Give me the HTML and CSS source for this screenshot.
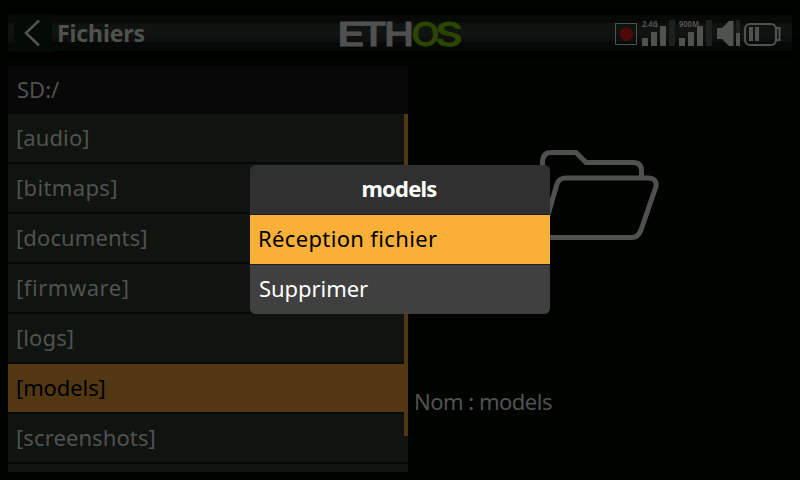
FILE: index.html
```html
<!DOCTYPE html>
<html lang="fr">
<head>
<meta charset="utf-8">
<title>Fichiers</title>
<link rel="stylesheet" href="styles.css">
</head>
<body>
<div class="screen">
  <header class="topbar">
    <button class="back" aria-label="Retour"><svg width="38" height="38" viewBox="0 0 38 38"><path d="M25 6.500 L12 19 L25 31.500" fill="none" stroke="#50524f" stroke-width="2.600"/></svg></button>
    <h1 class="title">Fichiers</h1>
    <svg class="logo" width="130" height="50" viewBox="0 0 130 50">
      <text class="logo-text" x="-1" y="37.500" fill="#505050" stroke="#505050" textLength="28" lengthAdjust="spacingAndGlyphs">E</text>
      <text class="logo-text" x="22" y="37.500" fill="#505050" stroke="#505050" textLength="27" lengthAdjust="spacingAndGlyphs">T</text>
      <text class="logo-text" x="46" y="37.500" fill="#505050" stroke="#505050" textLength="30" lengthAdjust="spacingAndGlyphs">H</text>
      <text class="logo-text" x="73.500" y="37.500" fill="#2b4600" stroke="#2b4600" textLength="28" lengthAdjust="spacingAndGlyphs">O</text>
      <text class="logo-text" x="97.500" y="37.500" fill="#2b4600" stroke="#2b4600" textLength="27" lengthAdjust="spacingAndGlyphs">S</text>
    </svg>
    <svg class="status" width="170" height="30" viewBox="0 0 170 30">
      <rect x="0.500" y="5.500" width="21" height="21" fill="none" stroke="#50524f"/>
      <path d="M9.500 9.500h4l4.500 4v5l-4.500 4.500h-4l-4.500-4.500v-5z" fill="#500808"/>
      <text class="band" x="27" y="8.500" textLength="16" lengthAdjust="spacingAndGlyphs">2.4G</text>
      <path d="M27 20h6v8h-6zM36 14h6v14h-6zM45 8h6v20h-6z" fill="#50524f"/>
      <path d="M54 2h6v26h-6z" fill="#1d211e"/>
      <text class="band" x="64" y="8.500" textLength="20" lengthAdjust="spacingAndGlyphs">900M</text>
      <path d="M64 20h6v8h-6zM73 14h6v14h-6zM82 8h6v20h-6z" fill="#50524f"/>
      <path d="M91 2h6v26h-6z" fill="#1d211e"/>
      <path d="M102 10h5l7-7h4.500v25h-4.500l-7-7h-5z" fill="#50524f"/>
      <path d="M121 2h4v13h-4z" fill="#1d211e"/><path d="M121 15h4v13h-4z" fill="#50524f"/>
      <rect x="130" y="6" width="31" height="21" rx="5" fill="none" stroke="#50524f" stroke-width="2.200"/>
      <path d="M161 10h3.500v12h-3.500" fill="none" stroke="#50524f" stroke-width="2"/>
      <path d="M134 9h4v14h-4zM140 9h4v14h-4z" fill="#50524f"/>
    </svg>
  </header>
  <main class="content">
    <section class="files">
      <div class="path">SD:/</div>
      <ul class="list">
        <li class="row">[audio]</li>
        <li class="row roomy">[bitmaps]</li>
        <li class="row">[documents]</li>
        <li class="row wide">[firmware]</li>
        <li class="row">[logs]</li>
        <li class="row selected tight">[models]</li>
        <li class="row">[screenshots]</li>
        <li class="row"></li>
      </ul>
      <div class="scrollbar"></div>
    </section>
    <section class="details">
      <svg class="folder" width="122" height="94" viewBox="0 0 122 94" fill="none" stroke="#505050" stroke-width="5">
        <path d="M4.500 91 V15 Q4.500 4.500 13 4.500 H38 L48 14.500 H95 Q103.500 14.500 103.500 23 V30"/>
        <path d="M28 30 H110 Q119 30 118 38.500 L103 82 Q100 89.500 94 89.500 H7 Q3 89.500 5 84 L19 36 Q21 30 28 30 Z"/>
      </svg>
      <p class="name">Nom : models</p>
    </section>
  </main>
  <div class="dialog" role="dialog">
    <div class="dialog-title">models</div>
    <div class="option active">Réception fichier</div>
    <div class="option">Supprimer</div>
  </div>
</div>
</body>
</html>
```
FILE: styles.css
```css
* { box-sizing: border-box; margin: 0; padding: 0; }
body { background: #000300; font-family: "Noto Sans", "Open Sans", sans-serif; font-size: 22px; line-height: 30px; color: #50524f; }
.screen { position: relative; width: 800px; height: 480px; padding: 8px; overflow: hidden; background: #000300; }
.topbar { display: flex; height: 50px; background: linear-gradient(#000 7px, #080907 7px, #070a07 15px, #0e100e 15px, #101411 19px, #101411 28px, #0f0f0f 28px, #0e0e0e 34px, #050a06 34px, #060706 43px, #000 43px); }
.back { width: 38px; height: 38px; margin: 6px 0 0 6px; border: 0; background: #040a06; }
.back svg { display: block; }
.title { width: 286px; padding: 10px 0 0 5px; font-size: 23px; font-weight: 700; letter-spacing: -0.1px; }
.logo { overflow: visible; }
.logo-text { font: 500 33px Inter, sans-serif; stroke-width: 1px; }
.status { margin: 10px 0 0 147px; flex: none; }
.band { font: 700 8px "Noto Sans", sans-serif; fill: #50524f; }
.content { display: flex; height: 406px; margin-top: 8px; }
.files { position: relative; width: 400px; overflow: hidden; background: #080808; }
.path { height: 48px; padding: 8px 9px; }
.list { list-style: none; }
.row { height: 48px; margin-bottom: 2px; padding: 8px; background: #101411; letter-spacing: 0.1px; }
.roomy { letter-spacing: 0.35px; }
.wide { letter-spacing: 0.55px; }
.tight { letter-spacing: -0.1px; }
.selected { background: #523812; color: #000; }
.scrollbar { position: absolute; top: 48px; right: 0; width: 4px; height: 322px; background: #523812; }
.details { flex: 1; padding-left: 6px; }
.folder { display: block; margin: 82px 0 0 124px; }
.name { margin-top: 144px; letter-spacing: -0.5px; }
.dialog { position: absolute; left: 250px; top: 165px; width: 300px; height: 149px; border-radius: 6px; overflow: hidden; background: #1f211f; color: #fff; }
.dialog-title { height: 49px; padding: 8px 2px 0 0; text-align: center; font-weight: 700; background: #303030; margin-bottom: 1px; letter-spacing: -0.8px; }
.option { height: 49px; padding: 8px 9px; background: #404040; letter-spacing: -0.05px; }
.active { margin-bottom: 1px; padding-left: 8px; background: #f9b038; color: #000; letter-spacing: 0.35px; }
```
